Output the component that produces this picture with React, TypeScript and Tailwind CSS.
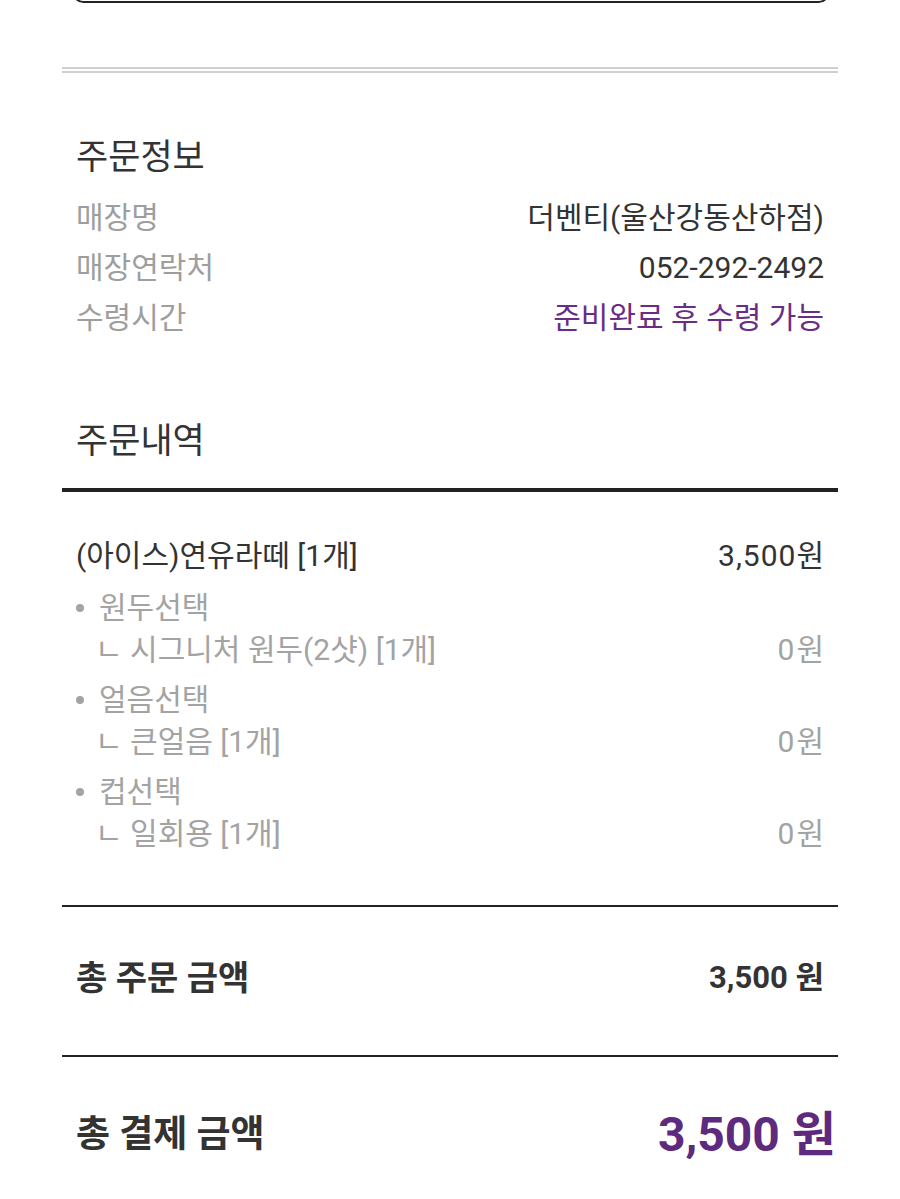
import React from "react";

const FONT = "font-['Roboto','Noto_Sans_CJK_KR',sans-serif]";

function InfoRow({ label, value, purple }: { label: string; value: string; purple?: boolean }) {
  return (
    <div className="flex h-[50px] items-center justify-between text-[30px] leading-[50px]">
      <span className="text-[#9e9e9e]">{label}</span>
      <span className={purple ? "text-[#6a2d85]" : "text-[#333333]"}>{value}</span>
    </div>
  );
}

function Option({ title, choice }: { title: string; choice: string }) {
  return (
    <div className="mt-[8px] text-[30px] text-[#a3a3a3]">
      <div className="flex h-[42px] items-center leading-[42px]">
        <span className="mr-[15px] inline-block h-[8px] w-[8px] rounded-full bg-[#a3a3a3]" />
        <span>{title}</span>
      </div>
      <div className="flex h-[42px] items-center justify-between leading-[42px]">
        <span className="pl-[19px]">ㄴ {choice}</span>
        <span className="mr-[-2px] tracking-[2px]">0원</span>
      </div>
    </div>
  );
}

export default function App() {
  return (
    <div className={`${FONT} min-h-[1199px] bg-white`}>
      <div className="ml-[72px] mr-[70px] -mt-[20px] h-[23px] rounded-[16px] border-[2.5px] border-[#222222]" />
      <div className="mx-[62px] mt-[64px] h-[6px] border-y-2 border-[#cfcfcf]" />

      <div className="mx-[62px]">
        <div className="px-[14px]">
          <div className="mt-[65px] h-[40px] text-[35px] leading-[40px] text-[#333333]">주문정보</div>
          <div className="mt-[15px]">
            <InfoRow label="매장명" value="더벤티(울산강동산하점)" />
            <InfoRow label="매장연락처" value="052-292-2492" />
            <InfoRow label="수령시간" value="준비완료 후 수령 가능" purple />
          </div>
          <div className="mt-[79px] h-[40px] text-[35px] leading-[40px] text-[#333333]">주문내역</div>
        </div>

        <div className="mt-[26px] h-[4px] bg-[#222222]" />

        <div className="px-[14px]">
          <div className="mt-[43px] flex h-[42px] items-center justify-between text-[30px] leading-[42px] text-[#333333]">
            <span>(아이스)연유라떼 [1개]</span>
            <span className="mr-[-1px] tracking-[1px]">3,500원</span>
          </div>
          <div className="pt-[2px]">
            <Option title="원두선택" choice="시그니처 원두(2샷) [1개]" />
            <Option title="얼음선택" choice="큰얼음 [1개]" />
            <Option title="컵선택" choice="일회용 [1개]" />
          </div>
        </div>

        <div className="mt-[50px] h-[2px] bg-[#222222]" />

        <div className="mt-[47px] flex h-[48px] items-center justify-between px-[14px] text-[#333333]">
          <span className="text-[34px] font-bold leading-[48px]">총 주문 금액</span>
          <span className="text-[31px] font-bold leading-[48px]">3,500 원</span>
        </div>

        <div className="mt-[53px] h-[2px] bg-[#222222]" />

        <div className="mt-[48px] flex h-[60px] items-center justify-between pl-[14px] pr-[2px]">
          <span className="text-[37px] font-bold leading-[60px] text-[#333333]">총 결제 금액</span>
          <span className="text-[48px] font-bold leading-[60px] text-[#5e2a7e]">3,500 원</span>
        </div>
      </div>
    </div>
  );
}
